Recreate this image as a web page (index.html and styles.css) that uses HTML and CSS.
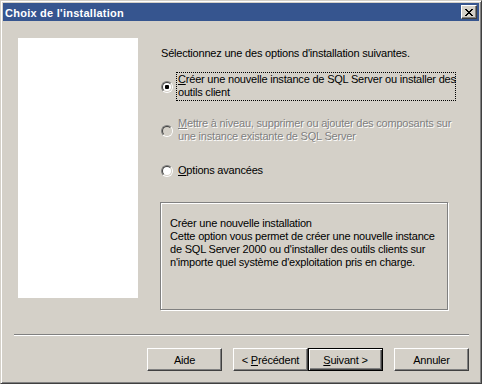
FILE: index.html
```html
<!DOCTYPE html>
<html lang="fr">
<head>
<meta charset="utf-8">
<title>Choix de l'installation</title>
<link rel="stylesheet" href="styles.css">
</head>
<body>
<div class="window">
  <div class="titlebar">
    <span class="title">Choix de l'installation</span>
    <button class="close" aria-label="Fermer">
      <svg width="8" height="7" viewBox="0 0 8 7" shape-rendering="crispEdges">
        <path fill="#000" d="M0 0h2v1H0zM6 0h2v1H6zM1 1h2v1H1zM5 1h2v1H5zM2 2h4v1H2zM3 3h2v1H3zM2 4h4v1H2zM1 5h2v1H1zM5 5h2v1H5zM0 6h2v1H0zM6 6h2v1H6z"/>
      </svg>
    </button>
  </div>
  <div class="body">
    <div class="main">
      <div class="panel"></div>
      <div class="right">
        <p class="intro">Sélectionnez une des options d'installation suivantes.</p>
        <div class="opt opt1">
          <span class="radio checked"><span class="ring"><span class="dot"></span></span></span>
          <span class="label focus"><u>C</u>réer une nouvelle instance de SQL Server ou installer des<br>outils client</span>
        </div>
        <div class="opt opt2 disabled">
          <span class="radio"><span class="ring"></span></span>
          <span class="label"><u>M</u>ettre à niveau, supprimer ou ajouter des composants sur<br>une instance existante de SQL Server</span>
        </div>
        <div class="opt opt3">
          <span class="radio"><span class="ring"></span></span>
          <span class="label"><u>O</u>ptions avancées</span>
        </div>
        <div class="group">
          Créer une nouvelle installation<br>
          Cette option vous permet de créer une nouvelle instance<br>
          de SQL Server 2000 ou d'installer des outils clients sur<br>
          n'importe quel système d'exploitation pris en charge.
        </div>
      </div>
    </div>
    <div class="sep"></div>
    <div class="footer">
      <button class="btn">Aide</button>
      <button class="btn prev">&lt; <u>P</u>récédent</button>
      <button class="btn default"><u>S</u>uivant &gt;</button>
      <button class="btn cancel">Annuler</button>
    </div>
  </div>
</div>
</body>
</html>
```

FILE: styles.css
```css
* { box-sizing: border-box; }
html, body { margin: 0; padding: 0; }
body {
  background: #d4d0c8;
  font-family: "Liberation Sans", Arial, sans-serif;
  font-size: 11px;
  line-height: 13px;
  letter-spacing: -0.2px;
  color: #000;
}
.window {
  width: 482px;
  height: 384px;
  border: 1px solid;
  border-color: #d4d0c8 #404040 #404040 #d4d0c8;
  background: #d4d0c8;
  box-shadow: inset 1px 1px 0 #fff, inset -1px -1px 0 #808080;
  padding: 2px;
}
.titlebar {
  height: 18px;
  background: #36558f;
  display: flex;
  align-items: flex-start;
  justify-content: space-between;
  padding-left: 2px;
}
.title {
  color: #fff;
  font-weight: bold;
  font-size: 11px;
  line-height: 13px;
  letter-spacing: 0.25px;
  margin-top: 4px;
}
.close {
  width: 16px;
  height: 14px;
  margin: 2px 2px 0 0;
  padding: 0;
  background: #d4d0c8;
  border: 1px solid;
  border-color: #fff #404040 #404040 #fff;
  box-shadow: inset -1px -1px 0 #808080;
  display: flex;
  align-items: center;
  justify-content: center;
}
.close svg { display: block; margin-left: -1px; }
.main {
  height: 313px;
  display: flex;
  align-items: flex-start;
  padding: 17px 0 0 15px;
}
.panel {
  width: 120px;
  height: 260px;
  background: #fff;
  flex: none;
}
.right {
  margin-left: 22px;
  padding-top: 9px;
}
.intro { margin: 0 0 0 1px; }
.opt {
  display: flex;
  align-items: center;
  margin-left: 1px;
}
.opt1 { margin-top: 12px; }
.opt2 { margin-top: 15px; }
.opt3 { margin-top: 18px; }
.radio {
  width: 12px;
  height: 12px;
  border-radius: 50%;
  border: 1px solid;
  border-color: #808080 #fff #fff #808080;
  margin-right: 3px;
  flex: none;
  display: flex;
}
.ring {
  width: 10px;
  height: 10px;
  border-radius: 50%;
  border: 1px solid;
  border-color: #404040 #d4d0c8 #d4d0c8 #404040;
  background: #fff;
  display: flex;
  align-items: center;
  justify-content: center;
}
.disabled .ring { background: #d4d0c8; }
.dot {
  width: 4px;
  height: 4px;
  border-radius: 1px;
  background: #000;
}
.label {
  width: 280px;
  border: 1px solid transparent;
  padding: 0 1px 1px 1px;
  white-space: nowrap;
}
.label.focus { border: 1px dotted #000; }
.disabled .label {
  color: #808080;
  text-shadow: 1px 1px 0 #fff;
}
.group {
  margin-top: 23px;
  width: 288px;
  height: 108px;
  border: 1px solid #808080;
  box-shadow: inset 1px 1px 0 #fff, 1px 1px 0 #fff;
  padding: 14px 4px 0 9px;
  white-space: nowrap;
}
.sep {
  margin: 0 10px 0 11px;
  border-top: 1px solid #808080;
  border-bottom: 1px solid #fff;
  height: 2px;
}
.footer {
  display: flex;
  justify-content: flex-end;
  padding: 12px 10px 0 0;
}
.btn {
  width: 75px;
  height: 23px;
  padding: 0;
  font-family: "Liberation Sans", Arial, sans-serif;
  font-size: 11px;
  letter-spacing: -0.2px;
  color: #000;
  background: #d4d0c8;
  border: 1px solid;
  border-color: #fff #404040 #404040 #fff;
  box-shadow: inset -1px -1px 0 #808080;
}
.btn.prev { margin-left: 11px; }
.btn.cancel { margin-left: 11px; }
.btn.default {
  border: 1px solid #000;
  box-shadow: inset 1px 1px 0 #fff, inset -1px -1px 0 #404040, inset -2px -2px 0 #808080;
}
```
